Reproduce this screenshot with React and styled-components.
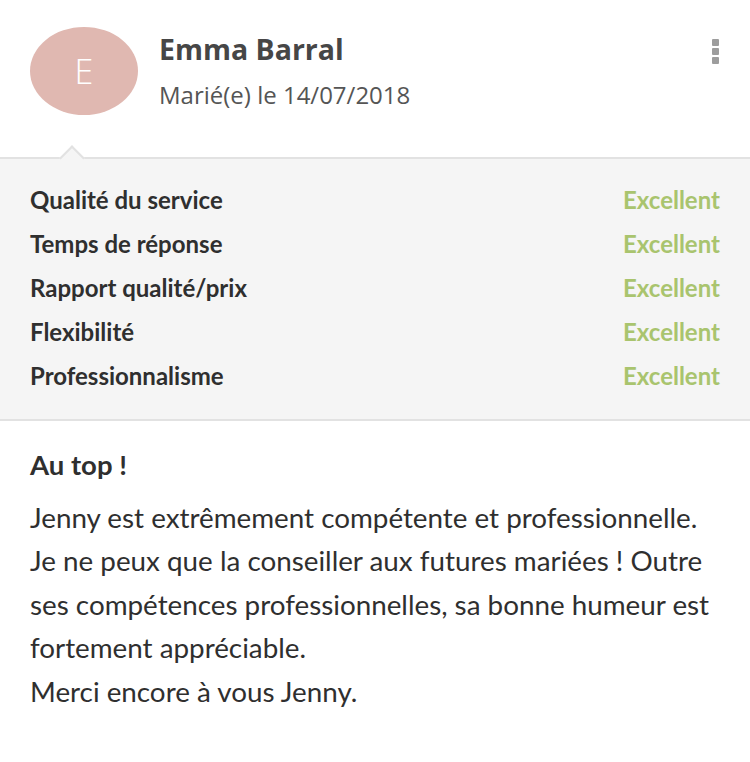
import styled, { createGlobalStyle } from "styled-components";

const GlobalStyle = createGlobalStyle`
  body {
    margin: 0;
    background: #fff;
    font-family: Lato, "Open Sans", sans-serif;
  }
`;

const Card = styled.article`
  width: 750px;
  background: #fff;
`;

const Header = styled.header`
  display: flex;
  align-items: flex-start;
  gap: 21px;
  padding: 27px 31px 42px 30px;
`;

const Avatar = styled.div`
  flex: none;
  width: 108px;
  height: 88px;
  border-radius: 50%;
  background: #e0b8b1;
  color: #fff;
  display: flex;
  align-items: center;
  justify-content: center;
  font-family: "Open Sans", sans-serif;
  font-weight: 300;
  font-size: 34px;
`;

const Who = styled.div`
  flex: 1;
  padding-top: 5px;
`;

const Name = styled.h2`
  margin: 0;
  font-family: "Open Sans", sans-serif;
  font-weight: 700;
  font-size: 28.5px;
  line-height: 34px;
  color: #464646;
`;

const Meta = styled.div`
  margin-top: 14px;
  font-family: "Open Sans", sans-serif;
  font-size: 24px;
  line-height: 30px;
  color: #555;
`;

const MenuButton = styled.button`
  border: 0;
  background: none;
  padding: 12px 0 0;
  display: flex;
  flex-direction: column;
  gap: 2px;
  cursor: pointer;
`;

const Dot = styled.span`
  width: 7px;
  height: 7px;
  border-radius: 1px;
  background: #9d9d9d;
`;

const Ratings = styled.ul`
  position: relative;
  list-style: none;
  margin: 0;
  padding: 18px 30px 22px;
  background: #f5f5f5;
  border-top: 2px solid #e2e2e2;
  border-bottom: 2px solid #e2e2e2;

  &::before {
    content: "";
    position: absolute;
    left: 63px;
    top: -10px;
    width: 16px;
    height: 16px;
    background: #f5f5f5;
    border-top: 2px solid #e2e2e2;
    border-left: 2px solid #e2e2e2;
    transform: rotate(45deg);
  }
`;

const Row = styled.li`
  display: flex;
  justify-content: space-between;
  align-items: center;
  height: 44px;
  font-size: 24px;
  font-weight: 700;
`;

const Label = styled.span`
  color: #2f2f2f;
`;

const Score = styled.span`
  color: #a9c46e;
`;

const Body = styled.section`
  padding: 29px 30px 40px;
  color: #2f2f2f;
`;

const Title = styled.h3`
  margin: 0 0 16px;
  font-size: 27.5px;
  font-weight: 700;
  line-height: 30px;
`;

const Text = styled.p`
  margin: 0;
  font-size: 27.8px;
  line-height: 43.4px;
`;

const ratings = [
  "Qualité du service",
  "Temps de réponse",
  "Rapport qualité/prix",
  "Flexibilité",
  "Professionnalisme",
];

export default function App() {
  return (
    <>
      <GlobalStyle />
      <Card>
        <Header>
          <Avatar>E</Avatar>
          <Who>
            <Name>Emma Barral</Name>
            <Meta>Marié(e) le 14/07/2018</Meta>
          </Who>
          <MenuButton aria-label="Options">
            <Dot />
            <Dot />
            <Dot />
          </MenuButton>
        </Header>
        <Ratings>
          {ratings.map((r) => (
            <Row key={r}>
              <Label>{r}</Label>
              <Score>Excellent</Score>
            </Row>
          ))}
        </Ratings>
        <Body>
          <Title>Au top !</Title>
          <Text>
            Jenny est extrêmement compétente et professionnelle.
            <br />
            Je ne peux que la conseiller aux futures mariées ! Outre ses
            compétences professionnelles, sa bonne humeur est fortement
            appréciable.
            <br />
            Merci encore à vous Jenny.
          </Text>
        </Body>
      </Card>
    </>
  );
}
